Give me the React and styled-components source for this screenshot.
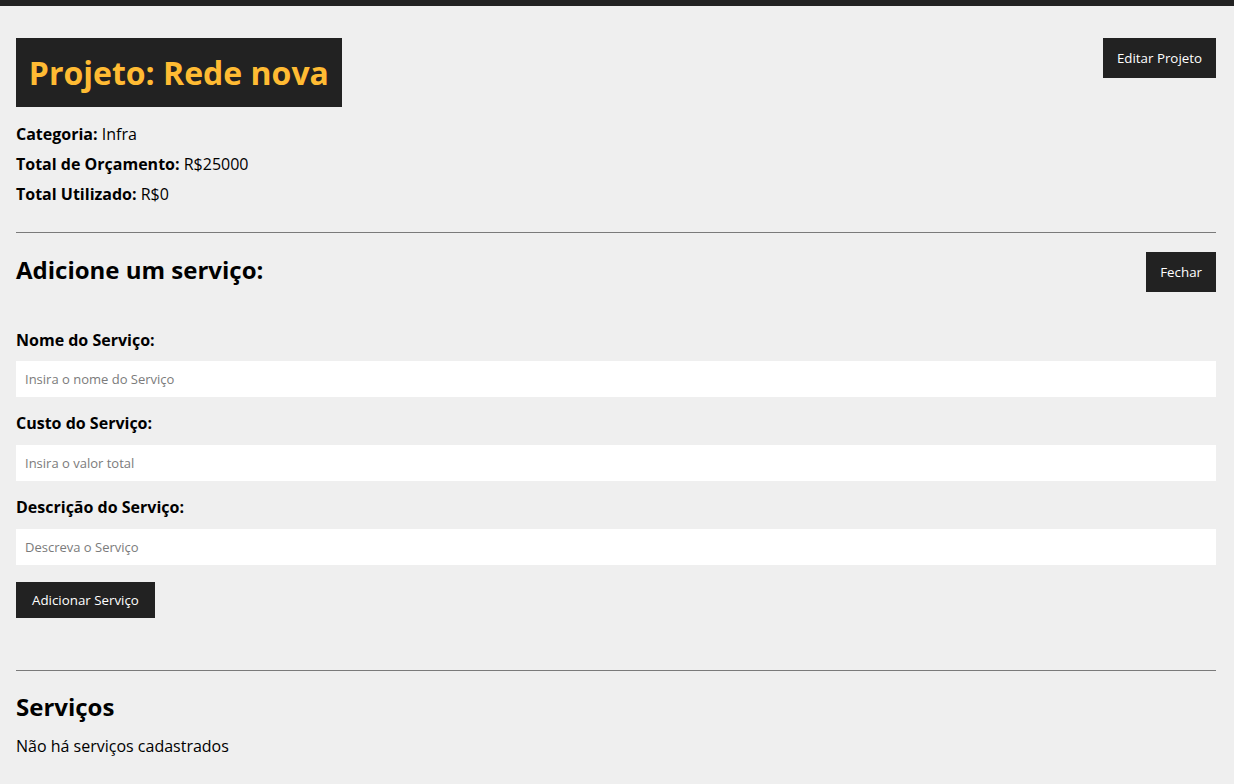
import React from 'react'
import styled, { createGlobalStyle } from 'styled-components'

const GlobalStyle = createGlobalStyle`
  * {
    box-sizing: border-box;
  }
  body {
    margin: 0;
    font-family: 'Open Sans', 'Noto Sans', sans-serif;
    background-color: #efefef;
    color: #000;
  }
`

const TopBar = styled.div`
  height: 6px;
  background-color: #222;
`

const Page = styled.div`
  width: 1200px;
  margin-left: 16px;
  padding-top: 32px;
`

const Section = styled.section`
  padding-bottom: ${(p) => p.$pad || '18px'};
  padding-top: ${(p) => p.$top || '0'};
  border-bottom: ${(p) => (p.$last ? 'none' : '1px solid #7a7a7a')};
  margin-bottom: 19px;
`

const HeaderRow = styled.div`
  display: flex;
  justify-content: space-between;
  align-items: flex-start;
`

const Title = styled.h1`
  margin: 0 0 17px;
  padding: 0.4em;
  font-size: 32px;
  font-weight: 700;
  line-height: 1.362;
  background-color: #222;
  color: #fb3;
`

const Button = styled.button`
  height: ${(p) => p.$h || '40px'};
  margin-top: ${(p) => p.$mt || '0'};
  padding: 0 ${(p) => p.$px || '14px'};
  border: none;
  background-color: #222;
  color: #fff;
  font-family: 'Open Sans', sans-serif;
  font-size: 13.33px;
  cursor: pointer;
`

const Info = styled.p`
  margin: 0 0 8px;
  font-size: 16px;
  line-height: 21.8px;
  span {
    font-weight: 700;
  }
`

const SubTitle = styled.h2`
  margin: ${(p) => p.$mt || '0'} 0 0;
  font-size: 24px;
  font-weight: 700;
  line-height: 32.7px;
`

const Form = styled.form`
  margin-top: 38px;
  padding-bottom: 52px;
`

const Control = styled.div`
  display: flex;
  flex-direction: column;
  margin-bottom: 16px;
  label {
    font-size: 16px;
    font-weight: 700;
    line-height: 21.8px;
    margin-bottom: 10px;
  }
  input {
    height: 36px;
    border: none;
    padding: 0 9px;
    font-family: 'Open Sans', sans-serif;
    font-size: 13px;
    background: #fff;
    outline: none;
  }
  input::placeholder {
    color: #7b7b7b;
  }
`

const Empty = styled.p`
  margin: 12px 0 0;
  font-size: 16px;
  line-height: 21.8px;
`

const fields = [
  { id: 'name', label: 'Nome do Serviço:', placeholder: 'Insira o nome do Serviço', type: 'text' },
  { id: 'cost', label: 'Custo do Serviço:', placeholder: 'Insira o valor total', type: 'number' },
  { id: 'description', label: 'Descrição do Serviço:', placeholder: 'Descreva o Serviço', type: 'text' },
]

export default function App() {
  return (
    <>
      <GlobalStyle />
      <TopBar />
      <Page>
        <Section>
          <HeaderRow>
            <Title>Projeto: Rede nova</Title>
            <Button>Editar Projeto</Button>
          </HeaderRow>
          <Info><span>Categoria:</span> Infra</Info>
          <Info><span>Total de Orçamento:</span> R$25000</Info>
          <Info><span>Total Utilizado:</span> R$0</Info>
        </Section>
        <Section $pad="0">
          <HeaderRow>
            <SubTitle $mt="2px">Adicione um serviço:</SubTitle>
            <Button>Fechar</Button>
          </HeaderRow>
          <Form onSubmit={(e) => e.preventDefault()}>
            {fields.map((f) => (
              <Control key={f.id}>
                <label htmlFor={f.id}>{f.label}</label>
                <input id={f.id} name={f.id} type={f.type} placeholder={f.placeholder} />
              </Control>
            ))}
            <Button $h="36px" $px="16px" $mt="1px" type="submit">Adicionar Serviço</Button>
          </Form>
        </Section>
        <Section $last $pad="0" $top="1px">
          <SubTitle>Serviços</SubTitle>
          <Empty>Não há serviços cadastrados</Empty>
        </Section>
      </Page>
    </>
  )
}
